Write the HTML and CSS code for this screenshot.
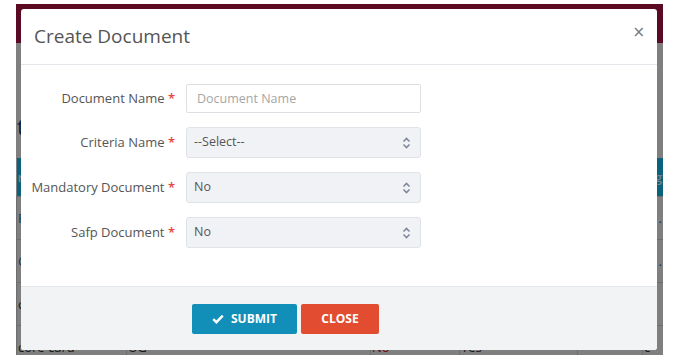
FILE: index.html
```html
<!DOCTYPE html>
<html lang="en">
<head>
  <meta charset="UTF-8" />
  <meta name="viewport" content="width=device-width, initial-scale=1" />
  <title>Create Document</title>
  <link rel="stylesheet" href="styles.css">
</head>
<body>
  <div class="frame">
    <div class="app">
      <header class="topbar"></header>

      <main class="content">
        <h3 class="page-title">t</h3>
        <table class="grid">
          <thead>
            <tr><th>r</th><th></th><th></th><th></th><th></th><th class="last">'g</th></tr>
          </thead>
          <tbody>
            <tr><td class="link">P</td><td></td><td></td><td></td><td></td><td class="link last">.</td></tr>
            <tr><td class="link">C</td><td></td><td></td><td></td><td></td><td class="link last">.</td></tr>
            <tr><td>c</td><td></td><td></td><td></td><td></td><td></td></tr>
            <tr><td>core card</td><td>UG</td><td class="no">No</td><td>Yes</td><td></td><td>c</td></tr>
          </tbody>
        </table>
      </main>

      <div class="backdrop"></div>

      <div class="modal">
        <div class="modal-header">
          <h4>Create Document</h4>
          <button class="close">&times;</button>
        </div>

        <div class="modal-body">
          <div class="form-row">
            <label>Document Name <span class="req">*</span></label>
            <input type="text" placeholder="Document Name" />
          </div>
          <div class="form-row">
            <label>Criteria Name <span class="req">*</span></label>
            <div class="select">
              <span>--Select--</span>
              <svg width="9" height="12" viewBox="0 0 9 12"><path d="M1.5 4.5 L4.5 1.5 L7.5 4.5 M1.5 7.5 L4.5 10.5 L7.5 7.5" fill="none" stroke="#7f889a" stroke-width="1.6"/></svg>
            </div>
          </div>
          <div class="form-row">
            <label>Mandatory Document <span class="req">*</span></label>
            <div class="select">
              <span>No</span>
              <svg width="9" height="12" viewBox="0 0 9 12"><path d="M1.5 4.5 L4.5 1.5 L7.5 4.5 M1.5 7.5 L4.5 10.5 L7.5 7.5" fill="none" stroke="#7f889a" stroke-width="1.6"/></svg>
            </div>
          </div>
          <div class="form-row">
            <label>Safp Document <span class="req">*</span></label>
            <div class="select">
              <span>No</span>
              <svg width="9" height="12" viewBox="0 0 9 12"><path d="M1.5 4.5 L4.5 1.5 L7.5 4.5 M1.5 7.5 L4.5 10.5 L7.5 7.5" fill="none" stroke="#7f889a" stroke-width="1.6"/></svg>
            </div>
          </div>
        </div>

        <div class="modal-footer">
          <button class="btn btn-submit">
            <svg width="12" height="10" viewBox="0 0 12 10"><path d="M1.2 5.2 L4.4 8.2 L10.8 1.6" fill="none" stroke="#fff" stroke-width="2.4"/></svg>
            SUBMIT
          </button>
          <button class="btn btn-close">CLOSE</button>
        </div>
      </div>
    </div>
  </div>
</body>
</html>
```

FILE: styles.css
```css
*, *::before, *::after { margin: 0; padding: 0; box-sizing: border-box; }

body {
  font-family: 'Open Sans', 'Liberation Sans', sans-serif;
  background: #fff;
  color: #555;
}

.frame {
  padding: 4px 18px 6px 16px;
}

.app {
  position: relative;
  height: 351px;
  overflow: hidden;
  background: #fff;
}

.topbar {
  height: 39px;
  background: #b41546;
}

.page-title {
  font-size: 22px;
  font-weight: 400;
  color: #1c3f8a;
  margin: 68px 0 0 1px;
  height: 47px;
}

.grid {
  width: 100%;
  border-collapse: collapse;
  font-size: 13px;
  color: #333;
}

.grid th {
  background: #16c4f8;
  color: #fff;
  height: 38px;
  text-align: left;
  font-weight: 600;
  padding: 0 1px;
}

.grid td {
  height: 43px;
  border-top: 1px solid #ddd;
  border-left: 1px solid #ddd;
  padding: 0 1px;
}

.grid .last { text-align: right; }

.grid td.link { color: #1d6fd0; }
.grid td.no { color: #d01010; }

.grid th:nth-child(1) { width: 110px; }
.grid th:nth-child(2) { width: 244px; }
.grid th:nth-child(3) { width: 89px; }
.grid th:nth-child(4) { width: 118px; }
.grid th:nth-child(5) { width: 65px; }

.backdrop {
  position: absolute;
  inset: 0;
  background: rgba(0, 0, 0, 0.5);
}

.modal {
  position: absolute;
  top: 5px;
  left: 5px;
  width: 636px;
  height: 341px;
  background: #fff;
  border-radius: 3px;
  display: flex;
  flex-direction: column;
  overflow: hidden;
}

.modal-header {
  height: 56px;
  border-bottom: 1px solid #e4e7ec;
  display: flex;
  align-items: center;
  justify-content: space-between;
  padding: 0 12px 0 13px;
}

.modal-header h4 {
  font-size: 19px;
  font-weight: 400;
  color: #555;
  margin-top: -1px;
}

.close {
  border: none;
  background: none;
  font-family: 'DejaVu Sans', sans-serif;
  font-size: 15px;
  color: #777;
  margin-top: -9px;
  cursor: pointer;
}

.modal-body {
  flex: 1;
  padding-top: 19px;
  display: flex;
  flex-direction: column;
  gap: 14px;
}

.form-row {
  display: grid;
  grid-template-columns: 154px 235px;
  column-gap: 11px;
  align-items: center;
}

.form-row label {
  text-align: right;
  font-size: 13px;
  color: #555;
  margin-top: -2px;
}

.req {
  color: #e8443b;
  font-weight: 600;
}

.form-row input {
  height: 29px;
  border: 1px solid #dcdfe4;
  border-radius: 2px;
  padding: 0 10px;
  font-family: inherit;
  font-size: 12.5px;
  color: #555;
}

.form-row input::placeholder { color: #a6a6a6; }

.select {
  height: 31px;
  background: #f1f2f5;
  border: 1px solid #dfe2e7;
  border-radius: 3px;
  display: flex;
  align-items: center;
  justify-content: space-between;
  padding: 0 9px 0 7px;
  font-size: 12.5px;
  color: #555;
}

.select span { margin-top: -2px; }

.modal-footer {
  height: 64px;
  background: #f2f3f5;
  border-top: 1px solid #e4e7ec;
  display: flex;
  align-items: center;
  gap: 4px;
  padding-left: 171px;
}

.btn {
  height: 30px;
  border: none;
  border-radius: 2px;
  color: #fff;
  font-family: inherit;
  font-size: 12px;
  font-weight: 700;
  display: flex;
  align-items: center;
  justify-content: center;
  gap: 7px;
  cursor: pointer;
}

.btn-submit {
  width: 105px;
  background: #128fb8;
}

.btn-close {
  width: 78px;
  background: #e24d31;
}
```
